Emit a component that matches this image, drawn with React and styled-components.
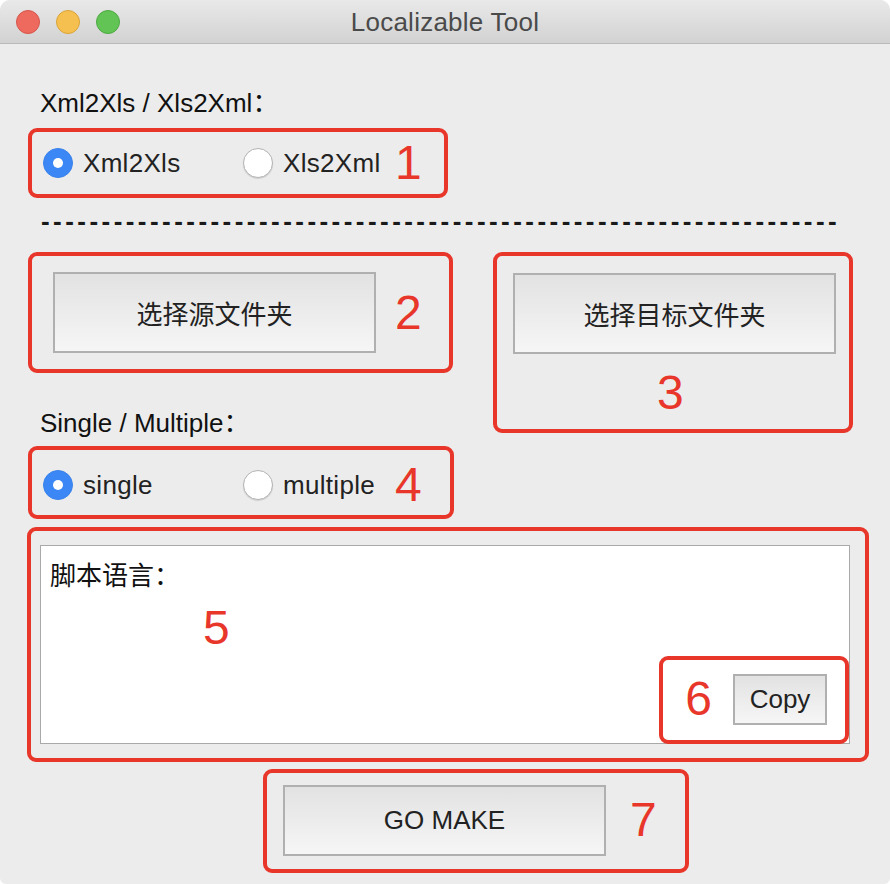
import React, { useState } from "react";
import styled, { createGlobalStyle } from "styled-components";

const GlobalStyle = createGlobalStyle`
  html, body {
    margin: 0;
    padding: 0;
    background: #ffffff;
  }
  body {
    font-family: "Liberation Sans", "Noto Sans CJK SC", sans-serif;
  }
`;

const RED = "#e8372a";

const Window = styled.div`
  width: 890px;
  height: 884px;
  background: #ececec;
  border-radius: 10px 10px 6px 6px;
  overflow: hidden;
  display: flex;
  flex-direction: column;
  font-family: "Liberation Sans", "Noto Sans CJK SC", sans-serif;
`;

const TitleBar = styled.div`
  height: 43px;
  flex: 0 0 43px;
  border-bottom: 1px solid #b9b9b9;
  background: linear-gradient(#e9e9e9, #d2d2d2);
  display: flex;
  align-items: center;
  position: relative;
`;

const Lights = styled.div`
  display: flex;
  gap: 16px;
  padding-left: 16px;
  padding-top: 1px;
`;

const Light = styled.span`
  width: 24px;
  height: 24px;
  border-radius: 50%;
  box-sizing: border-box;
  background: ${(p) => p.$color};
  border: 1px solid ${(p) => p.$edge};
`;

const Title = styled.div`
  position: absolute;
  left: 0;
  right: 0;
  top: 7px;
  text-align: center;
  font-size: 26px;
  line-height: 30px;
  letter-spacing: 0.25px;
  color: #4a4a4a;
  pointer-events: none;
`;

const Content = styled.div`
  display: flex;
  flex-direction: column;
  align-items: flex-start;
  padding-left: 28px;
`;

const Label = styled.div`
  height: 30px;
  line-height: 30px;
  font-size: 26px;
  color: #111;
  padding-left: 12px;
  margin-top: ${(p) => p.$top || 0}px;
`;

const RedBox = styled.div`
  box-sizing: border-box;
  border: 4px solid ${RED};
  border-radius: 9px;
  width: ${(p) => p.$w}px;
  height: ${(p) => p.$h}px;
`;

const RadioBox = styled(RedBox)`
  display: flex;
  align-items: center;
  padding-left: 11px;
  padding-top: ${(p) => p.$shift || 0}px;
  margin-top: ${(p) => p.$top || 0}px;
`;

const RadioItem = styled.label`
  display: flex;
  align-items: center;
  gap: 10px;
  width: ${(p) => p.$w}px;
  font-size: 26px;
  letter-spacing: 0.3px;
  color: #222;
  cursor: pointer;
`;

const RadioDot = styled.span`
  width: 30px;
  height: 30px;
  flex: 0 0 30px;
  border-radius: 50%;
  box-sizing: border-box;
  display: flex;
  align-items: center;
  justify-content: center;
  background: ${(p) => (p.$on ? "#3b87f5" : "#ffffff")};
  border: 1px solid ${(p) => (p.$on ? "#3a82ea" : "#b3b3b3")};
  box-shadow: ${(p) => (p.$on ? "none" : "0 1px 1px rgba(0,0,0,0.12)")};

  &::after {
    content: "";
    display: ${(p) => (p.$on ? "block" : "none")};
    width: 10px;
    height: 10px;
    border-radius: 50%;
    background: #fff;
  }
`;

const Num = styled.div`
  font-size: 48px;
  line-height: 48px;
  color: ${RED};
  margin-left: ${(p) => p.$left || 0}px;
  margin-top: ${(p) => p.$top || 0}px;
`;

const Divider = styled.div`
  margin-top: 8px;
  height: 30px;
  line-height: 30px;
  font-size: 26px;
  font-weight: bold;
  letter-spacing: 3.45px;
  color: #1a1a1a;
  padding-left: 13px;
  white-space: nowrap;
  overflow: hidden;
  width: 810px;
`;

const Grid = styled.div`
  margin-top: 16px;
  display: grid;
  grid-template-columns: 425px 360px;
  column-gap: 40px;
  align-items: start;
`;

const LeftCol = styled.div`
  display: flex;
  flex-direction: column;
  align-items: flex-start;
`;

const ButtonBox = styled(RedBox)`
  display: flex;
  align-items: center;
  padding-left: ${(p) => p.$pl}px;
`;

const StackBox = styled(RedBox)`
  display: flex;
  flex-direction: column;
  align-items: flex-start;
  padding-top: 17px;
  padding-left: 16px;
`;

const Button = styled.button`
  box-sizing: border-box;
  width: ${(p) => p.$w}px;
  height: ${(p) => p.$h}px;
  border: 2px solid #b0b0b0;
  border-radius: 0;
  background: linear-gradient(#e2e2e2, #f6f6f6);
  font-family: "Liberation Sans", "Noto Sans CJK SC", sans-serif;
  font-size: 26px;
  color: #222;
  padding: 0;
  cursor: pointer;
  flex: 0 0 auto;
`;

const ScriptBox = styled(RedBox)`
  margin-top: 8px;
  margin-left: -1px;
  padding: 14px 15px 14px 9px;
`;

const TextPanel = styled.div`
  box-sizing: border-box;
  height: 100%;
  background: #ffffff;
  border: 1px solid #a9a9a9;
  display: flex;
  flex-direction: column;
  align-items: flex-start;
  padding: 15px 0 0 9px;
`;

const PanelLabel = styled.div`
  height: 30px;
  line-height: 30px;
  font-size: 26px;
  color: #111;
`;

const CopyBox = styled(RedBox)`
  margin-top: auto;
  margin-bottom: -1px;
  align-self: flex-end;
  display: flex;
  align-items: center;
  justify-content: flex-end;
  gap: 21px;
  padding-right: 18px;
  padding-bottom: 2px;
`;

const MakeBox = styled(RedBox)`
  margin-top: 7px;
  margin-left: 235px;
  display: flex;
  align-items: center;
  padding-left: 16px;
  padding-bottom: 2px;
`;

const RadioGroup = ({ options, value, onChange, num }) => (
  <>
    {options.map((opt, i) => (
      <RadioItem key={opt} $w={i === 0 ? 200 : 152} onClick={() => onChange(opt)}>
        <RadioDot $on={value === opt} />
        {opt}
      </RadioItem>
    ))}
    <Num>{num}</Num>
  </>
);

export default function App() {
  const [mode, setMode] = useState("Xml2Xls");
  const [count, setCount] = useState("single");

  return (
    <>
      <GlobalStyle />
      <Window>
        <TitleBar>
          <Lights>
            <Light $color="#ee6a5f" $edge="#d5554b" />
            <Light $color="#f5c04f" $edge="#d9a43a" />
            <Light $color="#61c454" $edge="#4ea843" />
          </Lights>
          <Title>Localizable Tool</Title>
        </TitleBar>

        <Content>
          <Label $top={44}>Xml2Xls / Xls2Xml：</Label>
          <RadioBox $w={420} $h={70} $top={10}>
            <RadioGroup
              options={["Xml2Xls", "Xls2Xml"]}
              value={mode}
              onChange={setMode}
              num="1"
            />
          </RadioBox>

          <Divider>{"-".repeat(66)}</Divider>

          <Grid>
            <LeftCol>
              <ButtonBox $w={425} $h={121} $pl={21}>
                <Button $w={323} $h={81}>选择源文件夹</Button>
                <Num $left={19}>2</Num>
              </ButtonBox>
              <Label $top={35}>Single / Multiple：</Label>
              <RadioBox $w={426} $h={73} $top={8} $shift={5}>
                <RadioGroup
                  options={["single", "multiple"]}
                  value={count}
                  onChange={setCount}
                  num="4"
                />
              </RadioBox>
            </LeftCol>
            <StackBox $w={360} $h={181}>
              <Button $w={323} $h={81}>选择目标文件夹</Button>
              <Num $left={144} $top={15}>3</Num>
            </StackBox>
          </Grid>

          <ScriptBox $w={842} $h={235}>
            <TextPanel>
              <PanelLabel>脚本语言：</PanelLabel>
              <Num $left={153} $top={13}>5</Num>
              <CopyBox $w={190} $h={88}>
                <Num>6</Num>
                <Button $w={94} $h={51}>Copy</Button>
              </CopyBox>
            </TextPanel>
          </ScriptBox>

          <MakeBox $w={426} $h={104}>
            <Button $w={323} $h={71}>GO MAKE</Button>
            <Num $left={24}>7</Num>
          </MakeBox>
        </Content>
      </Window>
    </>
  );
}
